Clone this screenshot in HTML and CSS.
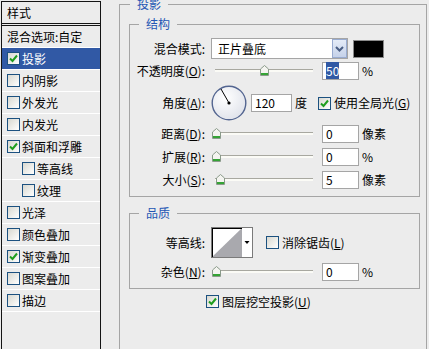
FILE: index.html
```html
<!DOCTYPE html>
<html>
  <head>
    <meta http-equiv="content-type" content="text/html; charset=UTF-8">
    <link rel="stylesheet" href="styles.css">
  </head>
  <body>
    <div class="pagina">
      <div class="estilos">
        <div class="estilostitulo">样式</div>
        <div class="estilo">混合选项:自定</div>
        <div class="estilo activo"><span class="casilla"><svg width="11" height="11"><path d="M2 5.5 L4.5 8 L9 2.5" stroke="#1f9e1f" stroke-width="2" fill="none"/></svg></span>投影</div>
        <div class="estilo"><span class="casilla"></span>内阴影</div>
        <div class="estilo"><span class="casilla"></span>外发光</div>
        <div class="estilo"><span class="casilla"></span>内发光</div>
        <div class="estilo"><span class="casilla"><svg width="11" height="11"><path d="M2 5.5 L4.5 8 L9 2.5" stroke="#1f9e1f" stroke-width="2" fill="none"/></svg></span>斜面和浮雕</div>
        <div class="estilo sub"><span class="casilla"></span>等高线</div>
        <div class="estilo sub"><span class="casilla"></span>纹理</div>
        <div class="estilo"><span class="casilla"></span>光泽</div>
        <div class="estilo"><span class="casilla"></span>颜色叠加</div>
        <div class="estilo"><span class="casilla"><svg width="11" height="11"><path d="M2 5.5 L4.5 8 L9 2.5" stroke="#1f9e1f" stroke-width="2" fill="none"/></svg></span>渐变叠加</div>
        <div class="estilo"><span class="casilla"></span>图案叠加</div>
        <div class="estilo"><span class="casilla"></span>描边</div>
      </div>

      <div class="principal">
        <fieldset class="grupo externo">
          <legend>投影</legend>

          <fieldset class="grupo interno">
            <legend>结构</legend>

            <div class="fila alta21 m8">
              <span class="etiqueta">混合模式:</span>
              <div class="desplegable">
                <span class="valor">正片叠底</span>
                <span class="boton"><svg width="9" height="6"><path d="M1 1 L4.5 4.5 L8 1" stroke="#4a5e84" stroke-width="2" fill="none"/></svg></span>
              </div>
              <span class="muestra"></span>
            </div>

            <div class="fila alta18 m3">
              <span class="etiqueta">不透明度(<u>O</u>):</span>
              <div class="deslizador">
                <div class="pista"></div>
                <span class="perilla" style="left: 49px;"><svg width="9" height="11"><path d="M4.5 0.5 L8.5 4 L8.5 10.5 L0.5 10.5 L0.5 4 Z" fill="#f4f4f0" stroke="#8a9a8a"/><rect x="1" y="8" width="7" height="2" fill="#35a335"/></svg></span>
              </div>
              <span class="numero"><span class="seleccion">50</span></span>
              <span class="unidad">%</span>
            </div>

            <div class="fila alta36 m5">
              <span class="etiqueta">角度(<u>A</u>):</span>
              <svg class="dial" width="36" height="36">
                <defs>
                  <radialGradient id="fondodial" cx="40%" cy="35%" r="70%">
                    <stop offset="0" stop-color="#ffffff"/>
                    <stop offset="1" stop-color="#dfe2ea"/>
                  </radialGradient>
                </defs>
                <circle cx="18" cy="18" r="16.8" fill="url(#fondodial)" stroke="#536590" stroke-width="1.4"/>
                <line x1="18" y1="18" x2="10" y2="4" stroke="#000" stroke-width="1"/>
                <circle cx="18" cy="18" r="1.6" fill="#000"/>
              </svg>
              <span class="numero ancho">120</span>
              <span class="unidad">度</span>
              <span class="casilla global"><svg width="11" height="11"><path d="M2 5.5 L4.5 8 L9 2.5" stroke="#1f9e1f" stroke-width="2" fill="none"/></svg></span>
              <span class="textocasilla">使用全局光(<u>G</u>)</span>
            </div>

            <div class="fila alta18 m4">
              <span class="etiqueta">距离(<u>D</u>):</span>
              <div class="deslizador">
                <div class="pista"></div>
                <span class="perilla" style="left: 1px;"><svg width="9" height="11"><path d="M4.5 0.5 L8.5 4 L8.5 10.5 L0.5 10.5 L0.5 4 Z" fill="#f4f4f0" stroke="#8a9a8a"/><rect x="1" y="8" width="7" height="2" fill="#35a335"/></svg></span>
              </div>
              <span class="numero">0</span>
              <span class="unidad">像素</span>
            </div>

            <div class="fila alta18 m5">
              <span class="etiqueta">扩展(<u>R</u>):</span>
              <div class="deslizador">
                <div class="pista"></div>
                <span class="perilla" style="left: 1px;"><svg width="9" height="11"><path d="M4.5 0.5 L8.5 4 L8.5 10.5 L0.5 10.5 L0.5 4 Z" fill="#f4f4f0" stroke="#8a9a8a"/><rect x="1" y="8" width="7" height="2" fill="#35a335"/></svg></span>
              </div>
              <span class="numero">0</span>
              <span class="unidad">%</span>
            </div>

            <div class="fila alta18 m5">
              <span class="etiqueta">大小(<u>S</u>):</span>
              <div class="deslizador">
                <div class="pista"></div>
                <span class="perilla" style="left: 5px;"><svg width="9" height="11"><path d="M4.5 0.5 L8.5 4 L8.5 10.5 L0.5 10.5 L0.5 4 Z" fill="#f4f4f0" stroke="#8a9a8a"/><rect x="1" y="8" width="7" height="2" fill="#35a335"/></svg></span>
              </div>
              <span class="numero">5</span>
              <span class="unidad">像素</span>
            </div>
          </fieldset>

          <fieldset class="grupo interno calidad">
            <legend>品质</legend>

            <div class="fila alta31 m8">
              <span class="etiqueta">等高线:</span>
              <span class="contorno">
                <svg width="40" height="29">
                  <rect x="0" y="0" width="30" height="29" fill="#fff"/>
                  <polygon points="0,29 30,0 30,29" fill="#a9a9ae"/>
                  <line x1="0.5" y1="0" x2="0.5" y2="29" stroke="#000"/>
                  <line x1="0" y1="0.5" x2="30" y2="0.5" stroke="#000"/>
                  <polygon points="32.5,13 37.5,13 35,16" fill="#000"/>
                </svg>
              </span>
              <span class="casilla alisado"></span>
              <span class="textocasilla">消除锯齿(<u>L</u>)</span>
            </div>

            <div class="fila alta18 m5">
              <span class="etiqueta">杂色(<u>N</u>):</span>
              <div class="deslizador">
                <div class="pista"></div>
                <span class="perilla" style="left: 1px;"><svg width="9" height="11"><path d="M4.5 0.5 L8.5 4 L8.5 10.5 L0.5 10.5 L0.5 4 Z" fill="#f4f4f0" stroke="#8a9a8a"/><rect x="1" y="8" width="7" height="2" fill="#35a335"/></svg></span>
              </div>
              <span class="numero">0</span>
              <span class="unidad">%</span>
            </div>
          </fieldset>

          <div class="fila alta13 m6 hueco">
            <span class="casilla"><svg width="11" height="11"><path d="M2 5.5 L4.5 8 L9 2.5" stroke="#1f9e1f" stroke-width="2" fill="none"/></svg></span>
            <span class="textocasilla">图层挖空投影(<u>U</u>)</span>
          </div>
        </fieldset>
      </div>
    </div>
  </body>
</html>
```

FILE: styles.css
```css
html{background-color: #ececec;}
body{
  margin: 0;
  height: 349px;
  overflow: hidden;
  font-family: "Noto Sans CJK SC", sans-serif;
  font-size: 12px;
  line-height: 14px;
  color: black;
}
u{text-decoration: underline; text-underline-offset: 1px;}
.pagina{
  display: flex;
  height: 349px;
}

/* lista de estilos a la izquierda */
.estilos{
  flex: none;
  box-sizing: border-box;
  width: 100px;
  height: 348px;
  margin: 1px 0 0 1px;
  border: 1px solid #141414;
  border-bottom: none;
}
.estilostitulo{
  height: 21px;
  line-height: 21px;
  padding-left: 5px;
  border-bottom: 3px double #141414;
}
.estilo{
  height: 21px;
  display: flex;
  align-items: center;
  gap: 2px;
  padding-left: 5px;
  border-bottom: 1px solid #ffffff;
}
.estilo.sub{padding-left: 20px;}
.estilo.activo{
  background-color: #3159a5;
  color: white;
}
.casilla{
  flex: none;
  display: inline-flex;
  width: 11px;
  height: 11px;
  border: 1px solid #1c5180;
  background: linear-gradient(135deg, #d8d8d0, #ffffff);
}

/* panel derecho */
.principal{
  flex: 1;
  min-width: 0;
}
.grupo{
  margin: 0;
  padding: 0;
  min-width: 0;
  border: 1px solid #a5a5a5;
}
.grupo > legend{
  padding: 0 7px;
  line-height: 12px;
  color: #2456b4;
}
.externo{
  box-sizing: border-box;
  margin: -2px 2px 0 18px;
  height: 351px;
  border-bottom: none;
}
.externo > legend{margin-left: 10px;}
.interno{
  margin: 8px 6px 0 9px;
  padding-bottom: 7px;
}
.interno > legend{margin-left: 9px;}
.calidad{margin-top: 10px;}

.fila{
  display: flex;
  align-items: center;
}
.alta13{height: 13px;}
.alta18{height: 18px;}
.alta21{height: 21px;}
.alta31{height: 31px;}
.alta36{height: 36px;}
.m3{margin-top: 3px;}
.m4{margin-top: 4px;}
.m5{margin-top: 5px;}
.m6{margin-top: 6px;}
.m8{margin-top: 8px;}
.etiqueta{
  flex: none;
  width: 75px;
  margin-right: 6px;
  text-align: right;
  white-space: nowrap;
}

.desplegable{
  display: flex;
  align-items: center;
  width: 135px;
  height: 19px;
  border: 1px solid #a5a5a5;
  background-color: white;
}
.desplegable .valor{
  flex: 1;
  padding-left: 6px;
}
.boton{
  display: flex;
  justify-content: center;
  align-items: center;
  width: 13px;
  height: 17px;
  border: 1px solid #98abd0;
  background: linear-gradient(#e4ebf7, #c5d2ea);
}
.muestra{
  width: 29px;
  height: 16px;
  margin-left: 5px;
  border: 1px solid #8a8a8a;
  background-color: black;
}

.deslizador{
  position: relative;
  flex: none;
  width: 102px;
  height: 18px;
  margin-right: 9px;
}
.pista{
  width: 98px;
  height: 2px;
  margin: 7px 0 0 4px;
  border-top: 1px solid #a8a8a0;
  background-color: #fbfbf6;
}
.perilla{
  position: absolute;
  top: 3px;
  display: flex;
}

.numero{
  flex: none;
  box-sizing: border-box;
  width: 37px;
  height: 18px;
  padding-left: 3px;
  line-height: 16px;
  border: 1px solid #a5a5a5;
  background-color: white;
}
.numero.ancho{
  width: 41px;
  margin-left: 4px;
}
.seleccion{
  background-color: #3159a5;
  color: white;
}
.unidad{margin-left: 3px;}
.global{margin-left: 11px;}
.textocasilla{margin-left: 3px; white-space: nowrap;}

.contorno{
  display: flex;
  width: 40px;
  height: 29px;
  border: 1px solid #7a7a7a;
  background-color: white;
}
.alisado{margin-left: 13px;}
.hueco{padding-left: 86px;}
```
